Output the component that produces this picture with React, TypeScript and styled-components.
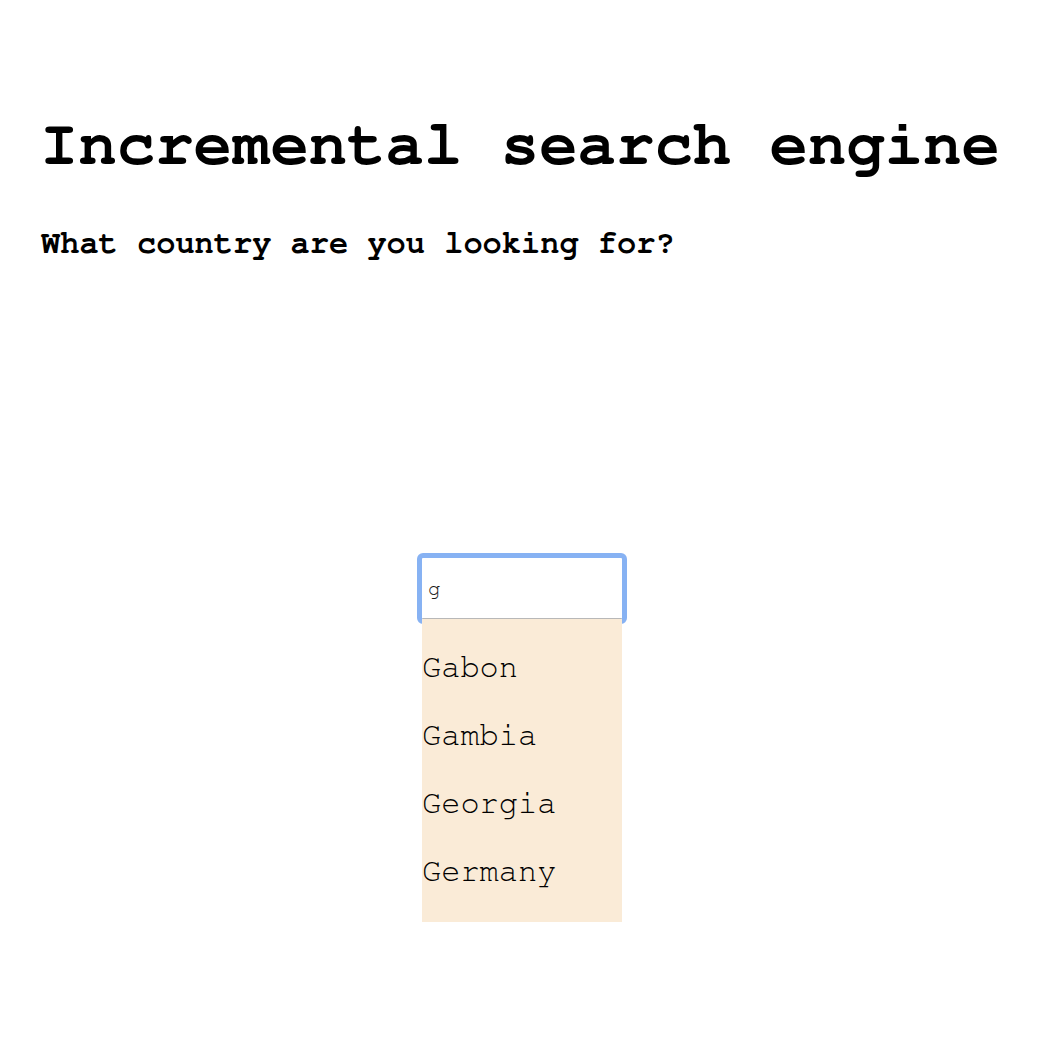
import React, { useState } from "react";
import styled, { createGlobalStyle } from "styled-components";

const mono = `FreeMono, "Courier New", "Liberation Mono", monospace`;

const GlobalStyle = createGlobalStyle`
  html, body {
    margin: 0;
    padding: 0;
    background: #ffffff;
  }
  body {
    font-family: ${mono};
    color: #000000;
  }
`;

const Page = styled.main`
  display: flex;
  flex-direction: column;
  padding: 109px 40px 0 40px;
  min-height: 1038px;
  box-sizing: border-box;
`;

const Title = styled.h1`
  margin: 0 0 44px 0;
  font-size: 64px;
  line-height: 72px;
  font-weight: bold;
  white-space: nowrap;
`;

const Question = styled.h2`
  margin: 0 0 297px 1px;
  font-size: 32px;
  line-height: 36px;
  font-weight: bold;
`;

const SearchArea = styled.section`
  display: flex;
  justify-content: center;
  padding-left: 6px;
`;

const SearchBox = styled.div`
  position: relative;
  width: 200px;
`;

const SearchInput = styled.input`
  display: block;
  width: 200px;
  height: 61px;
  box-sizing: border-box;
  margin: 0;
  padding: 0 6px;
  border: none;
  border-bottom: 1px solid #b8b8b8;
  border-radius: 1px;
  background: #ffffff;
  font-family: ${mono};
  font-size: 21px;
  color: #1a1a1a;
  outline: 5px solid #87b2f3;
  outline-offset: 0;
`;

const Suggestions = styled.ul`
  position: absolute;
  top: 100%;
  left: 0;
  width: 200px;
  margin: 0;
  padding: 30px 0 33px 0;
  list-style: none;
  display: flex;
  flex-direction: column;
  gap: 32px;
  background: #faebd7;
`;

const Suggestion = styled.li`
  font-size: 32px;
  line-height: 36px;
  font-weight: normal;
  color: #000000;
`;

const countries = ["Gabon", "Gambia", "Georgia", "Germany"];

export default function App() {
  const [query, setQuery] = useState("g");
  return (
    <>
      <GlobalStyle />
      <Page>
        <Title>Incremental search engine</Title>
        <Question>What country are you looking for?</Question>
        <SearchArea>
          <SearchBox>
            <SearchInput
              type="text"
              value={query}
              onChange={(e) => setQuery(e.target.value)}
            />
            <Suggestions>
              {countries.map((c) => (
                <Suggestion key={c}>{c}</Suggestion>
              ))}
            </Suggestions>
          </SearchBox>
        </SearchArea>
      </Page>
    </>
  );
}
